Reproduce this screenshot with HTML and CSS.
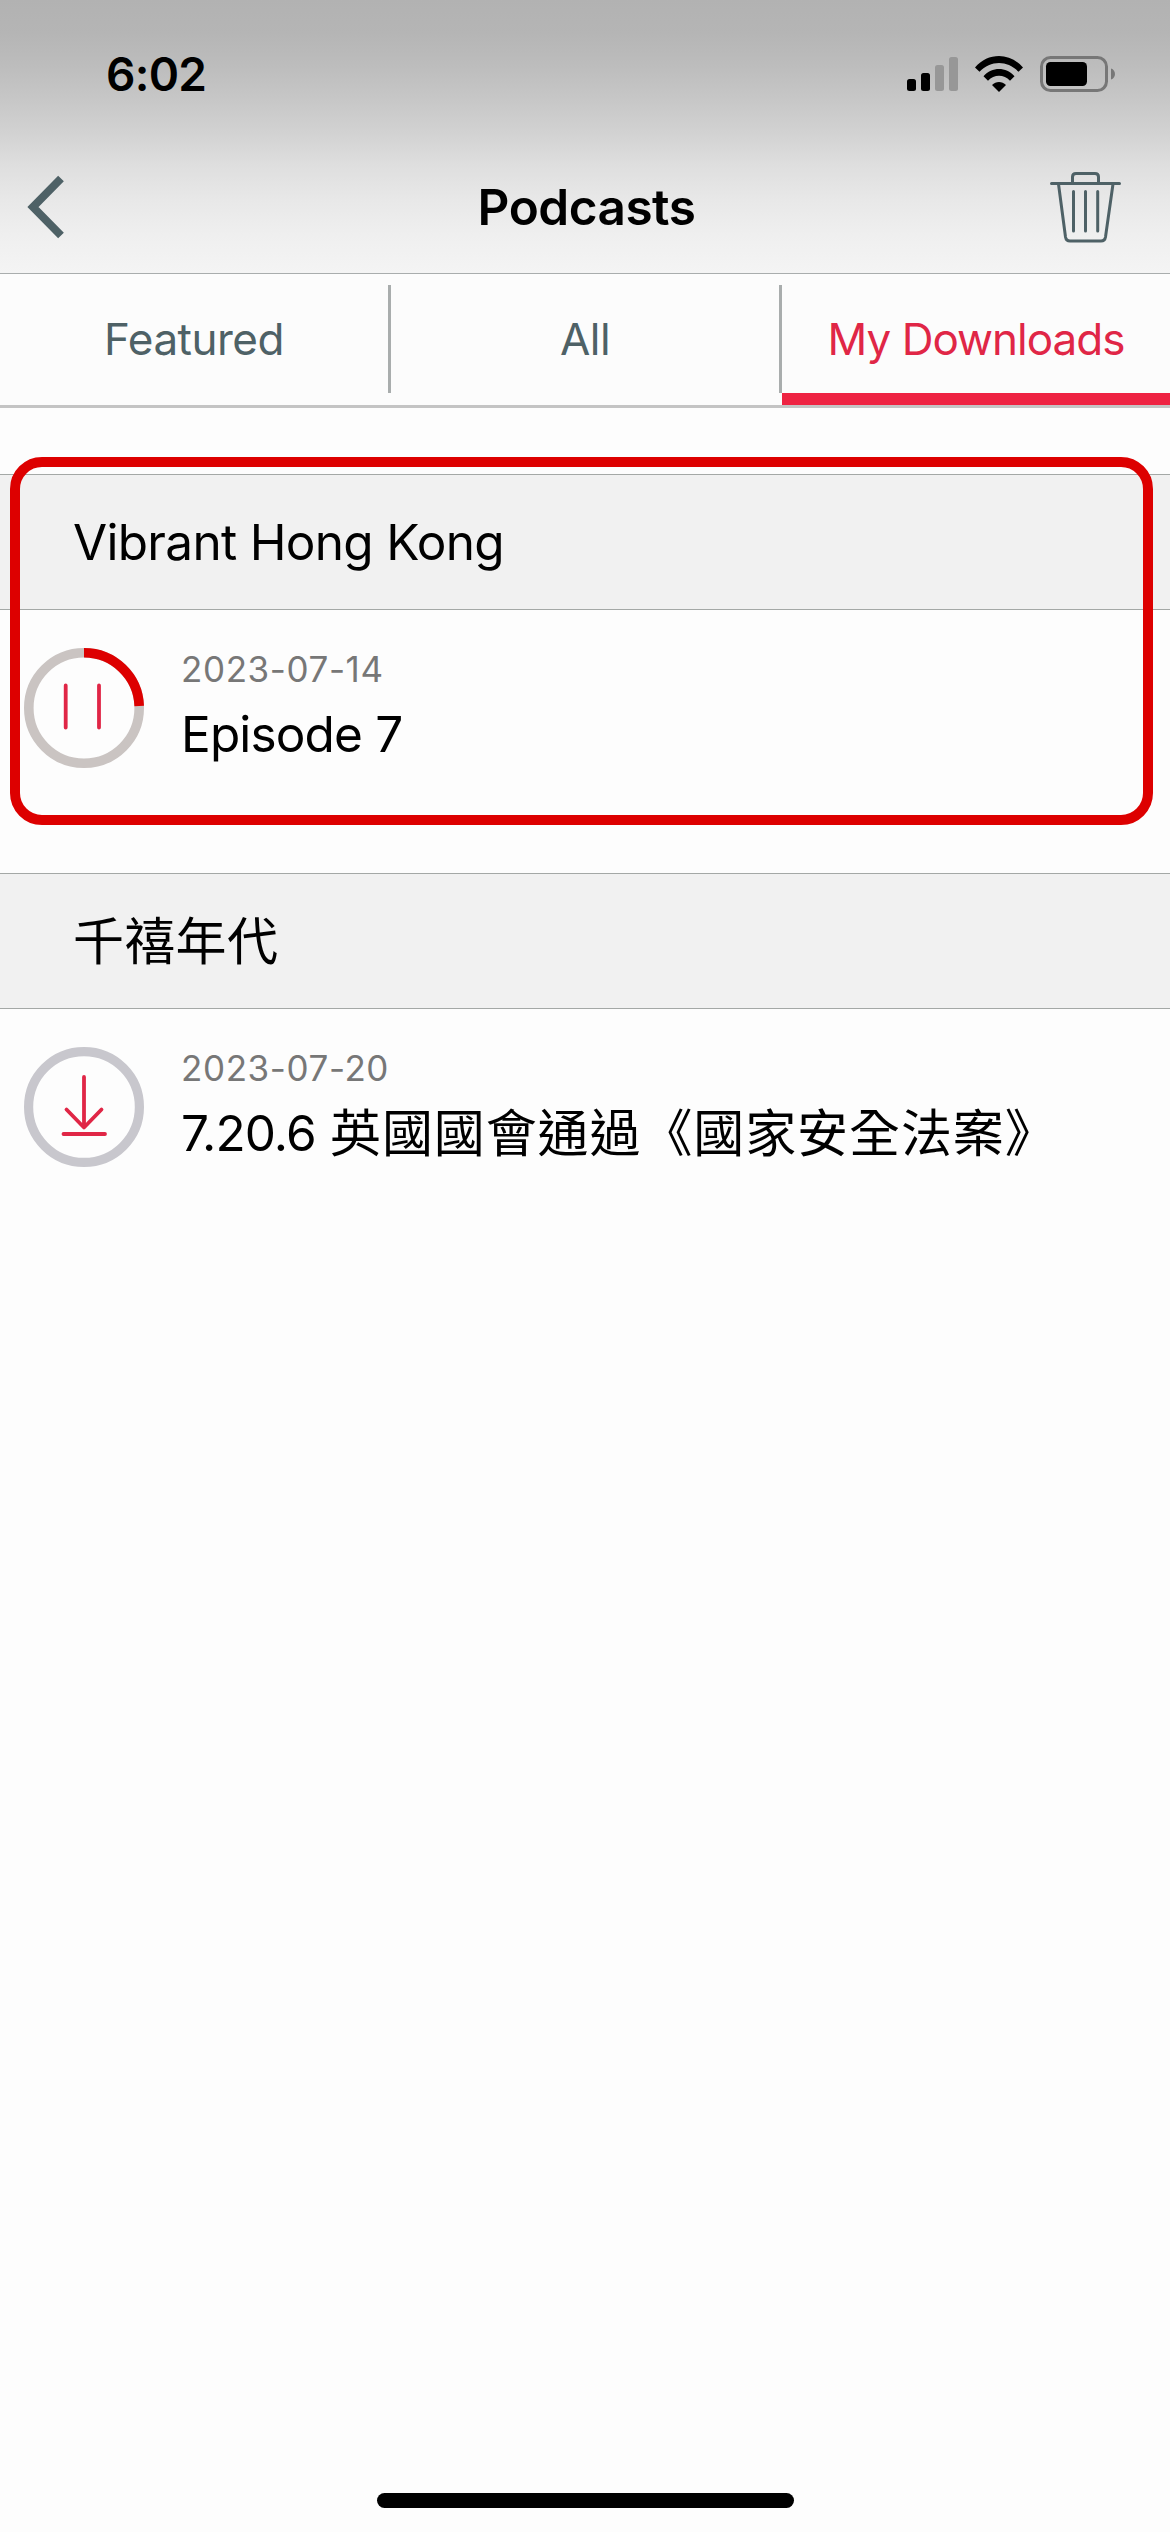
FILE: index.html
```html
<!DOCTYPE html>
<html lang="en">
<head>
<meta charset="utf-8">
<title>Podcasts</title>
<link rel="stylesheet" href="styles.css">
</head>
<body>
<div class="screen">
  <header class="top">
    <div class="status">
      <span class="time">6:02</span>
      <svg class="signal" width="51" height="36" viewBox="0 0 51 36">
        <rect x="0" y="23" width="9" height="12" rx="2.5"/>
        <rect x="14" y="17" width="9" height="18" rx="2.5"/>
        <rect class="dim" x="28" y="9" width="9" height="26" rx="2.5"/>
        <rect class="dim" x="42" y="1" width="9" height="34" rx="2.5"/>
      </svg>
      <svg class="wifi" width="48" height="36" viewBox="0 0 48 36">
        <path d="M0 11.5C13-3.8 35-3.8 48 11.5L43.5 15.8C32.500 4 15.500 4 4.500 15.800Z"/>
        <path d="M8.500 20.300C17 10.600 31 10.600 39.500 20.300L35 24.700C29 18 19 18 13 24.700Z"/>
        <path d="M17 29C21 25 27 25 31 29L24 36Z"/>
      </svg>
      <svg class="battery" width="76" height="36" viewBox="0 0 76 36">
        <rect class="case" x="1.500" y="1.500" width="65" height="33" rx="9"/>
        <rect x="6" y="6" width="41" height="24" rx="4.500"/>
        <path class="nub" d="M71 12.500C76.300 14 76.300 22 71 23.500Z"/>
      </svg>
    </div>
    <div class="nav">
      <svg class="back" width="40" height="66" viewBox="0 0 40 66"><path d="M36 4.500L8 33L36 61.500"/></svg>
      <h1 class="title">Podcasts</h1>
      <svg class="trash" width="71" height="72" viewBox="0 0 71 72">
        <path d="M1.500 12.500H69.500M22.500 12V6Q22.500 2.500 26 2.500H45Q48.500 2.500 48.500 6V12M8.500 13L15.500 66Q16.200 70 20 70H51Q54.800 70 55.500 66L63 13M23.500 20.500V60M35.500 20.500V60M47.700 20.500V60"/>
      </svg>
    </div>
  </header>
  <nav class="tabs">
    <a class="tab">Featured</a>
    <i class="divider"></i>
    <a class="tab">All</a>
    <i class="divider"></i>
    <a class="tab active">My Downloads</a>
  </nav>
  <main class="list">
    <section class="group">
      <h2 class="programme">Vibrant Hong Kong</h2>
      <div class="episode">
        <svg class="ring" width="120" height="120" viewBox="0 0 120 120">
          <circle class="track warm" cx="60" cy="60" r="55.200"/>
          <path class="progress" d="M60 4.800A55.200 55.200 0 0 1 115.200 58"/>
          <path class="glyph" d="M41.700 37.500V79.500M75 37.500V79.500"/>
        </svg>
        <div class="info">
          <span class="date">2023-07-14</span>
          <span class="name">Episode 7</span>
        </div>
      </div>
      <div class="highlight"></div>
    </section>
    <section class="group">
      <h2 class="programme zh" lang="zh-Hant">千禧年代</h2>
      <div class="episode">
        <svg class="ring" width="120" height="120" viewBox="0 0 120 120">
          <circle class="track" cx="60" cy="60" r="55.400"/>
          <path class="glyph" d="M60 30V80M42.500 62.500L60 80.500L77.500 62.500M39.500 87H81"/>
        </svg>
        <div class="info">
          <span class="date">2023-07-20</span>
          <span class="name"><span class="num">7.20.6</span><span class="zh" lang="zh-Hant">英國國會通過《國家安全法案》</span></span>
        </div>
      </div>
    </section>
  </main>
  <footer class="home"><div class="home-bar"></div></footer>
</div>
</body>
</html>
```

FILE: styles.css
```css
* { box-sizing: border-box; }
body {
  margin: 0;
  font-family: Inter, "Noto Sans CJK TC", sans-serif;
  color: #000;
  background: #fdfdfd;
}
svg { display: block; flex: none; }
h1, h2 { margin: 0; }

.screen {
  width: 1170px;
  height: 2532px;
  display: flex;
  flex-direction: column;
  overflow: hidden;
}

.top {
  height: 274px;
  border-bottom: 1px solid #a9adad;
  background: linear-gradient(#b2b2b2 0, #b5b5b5 33px, #bdbdbd 67px, #c7c7c7 100px, #d2d2d2 133px, #dfdfdf 167px, #e8e8e8 200px, #efefef 235px, #f4f4f4 273px);
}
.status {
  height: 148px;
  padding: 0 54px 0 106px;
  display: flex;
  align-items: center;
}
.time {
  font-size: 46px;
  font-weight: 600;
  letter-spacing: -0.7px;
  margin-right: auto;
}
.signal { margin-right: 17px; }
.wifi { margin-right: 17px; }
.dim { fill: #979797; }
.case { fill: none; stroke: #777; stroke-width: 3; }
.nub { fill: #777; }

.nav {
  height: 117px;
  padding: 0 49px 0 25px;
  display: grid;
  grid-template-columns: 98px 1fr 71px;
  column-gap: 12px;
  align-items: center;
}
.title {
  font-size: 49.5px;
  font-weight: 600;
  letter-spacing: -0.5px;
  text-align: center;
}
.back, .trash { fill: none; stroke: #4e6166; }
.back { stroke-width: 8; }
.trash { stroke-width: 3; stroke-linecap: round; }

.tabs {
  height: 134px;
  display: grid;
  grid-template-columns: 388px 3px 388px 3px 388px;
  background: #fcfcfc;
  border-bottom: 3px solid #c4c4c4;
}
.tab {
  display: flex;
  align-items: center;
  justify-content: center;
  padding-bottom: 2px;
  font-size: 44px;
  letter-spacing: -0.5px;
  color: #4e6166;
}
.active {
  color: #e02646;
  letter-spacing: -1px;
  box-shadow: inset 0 -12px #ee2342;
}
.divider {
  background: #a9adad;
  margin: 11px 0 12px;
}

.list { padding-top: 66px; flex: 1; }
.group { position: relative; height: 399px; }
.programme {
  height: 136px;
  line-height: 134px;
  padding-left: 73px;
  font-size: 49.5px;
  font-weight: 400;
  letter-spacing: -0.7px;
  background: #f1f1f1;
  border: solid #a4a8a6;
  border-width: 1px 0;
}
.episode {
  display: flex;
  align-items: flex-start;
  padding: 38px 24px 0;
  gap: 37px;
}
.info { display: flex; flex-direction: column; }
.date {
  font-size: 35px;
  line-height: 42px;
  letter-spacing: 0.6px;
  color: #777;
}
.name {
  font-size: 49.5px;
  line-height: 60px;
  letter-spacing: -0.85px;
  margin-top: 14px;
  display: flex;
  white-space: nowrap;
}
.num { width: 149px; }
.zh {
  font-family: "Noto Sans CJK TC", sans-serif;
  font-size: 51px;
  letter-spacing: 0.9px;
}
.programme.zh { line-height: 128px; letter-spacing: 0.3px; }
.name .zh { line-height: 54px; }
.track { fill: none; stroke: #c8c7cd; stroke-width: 9.2; }
.warm { stroke: #cac4c2; stroke-width: 9.6; }
.progress { fill: none; stroke: #dd0000; stroke-width: 9.6; }
.glyph { fill: none; stroke: #e02646; stroke-width: 3.8; stroke-linecap: round; stroke-linejoin: round; }

/* callout drawn around the first programme */
.highlight {
  position: absolute;
  left: 10px;
  top: -17px;
  width: 1143px;
  height: 368px;
  border: 10px solid #dd0000;
  border-radius: 32px;
}

.home {
  height: 39px;
  display: flex;
  justify-content: center;
}
.home-bar {
  width: 417px;
  height: 15px;
  border-radius: 8px;
  background: #000;
}
```
